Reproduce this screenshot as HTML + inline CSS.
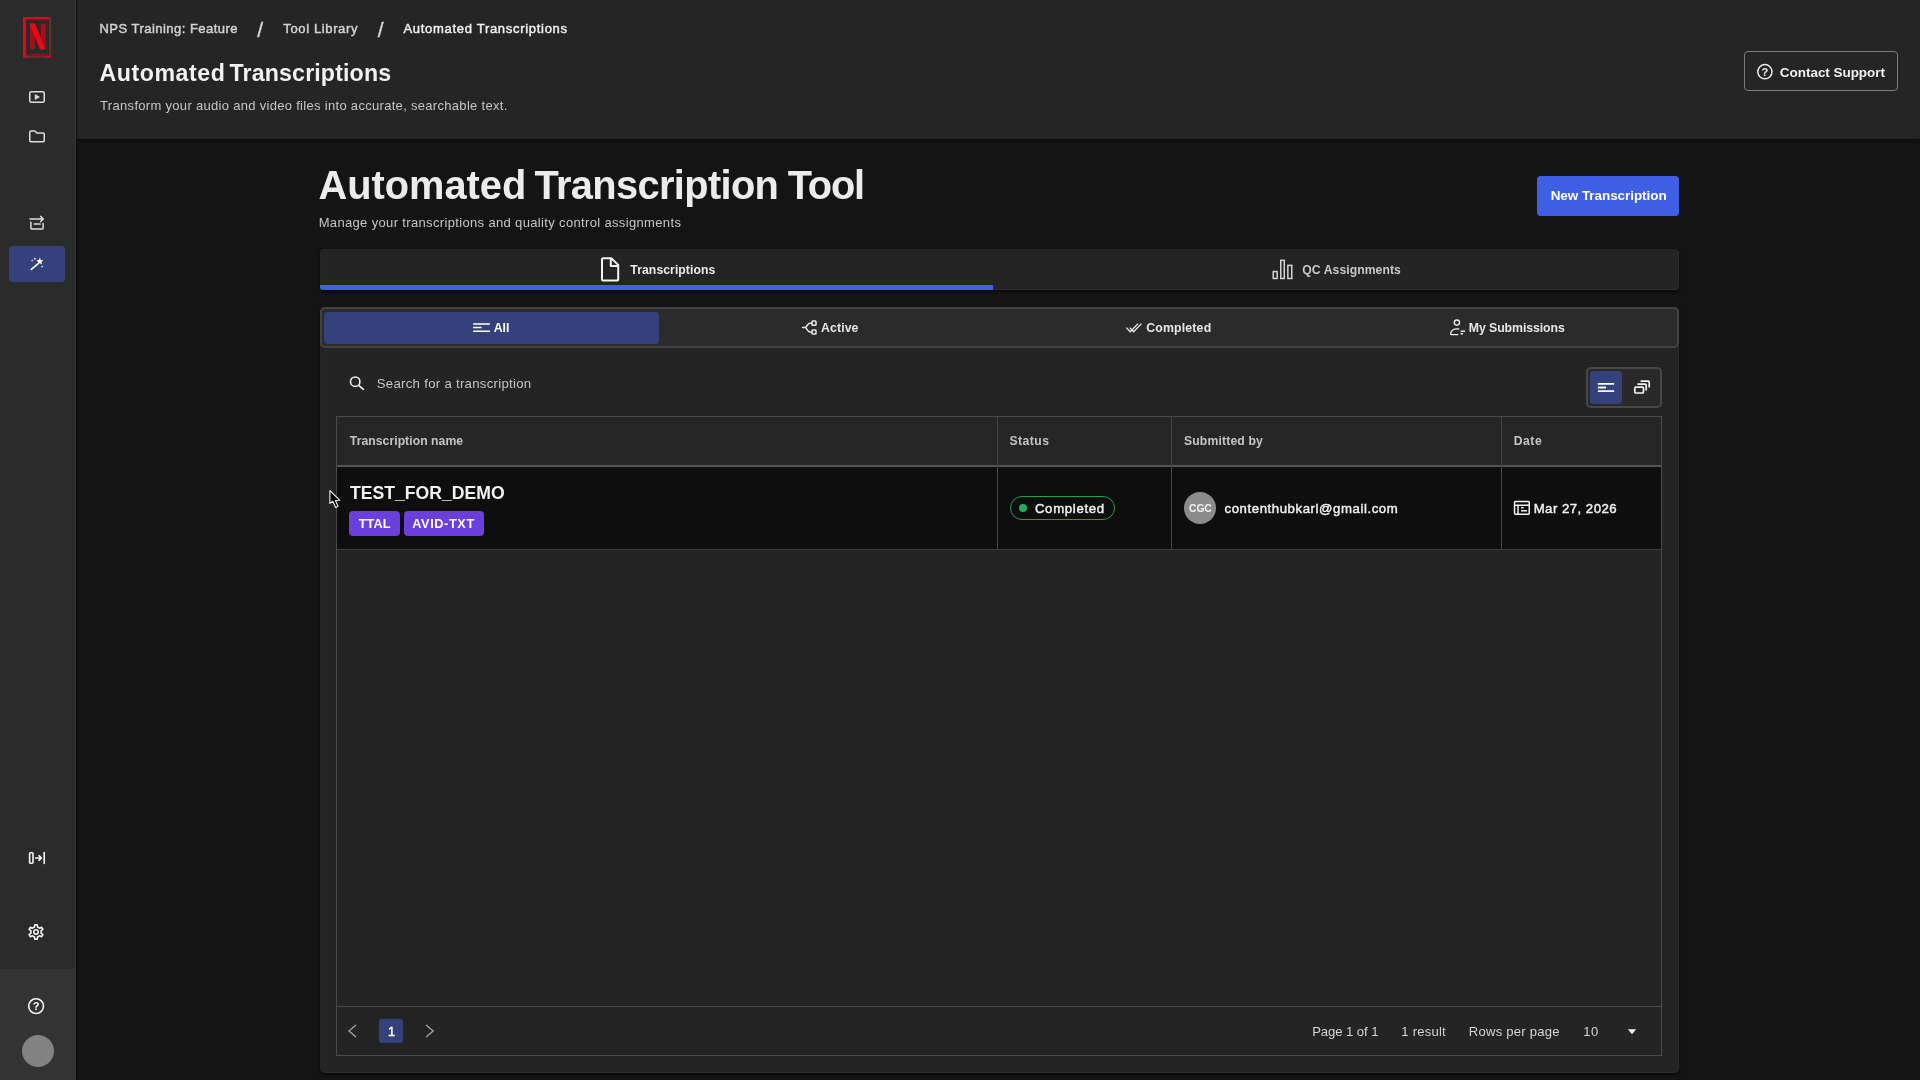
<!DOCTYPE html>
<html lang="en">
<head>
<meta charset="utf-8">
<title>Automated Transcriptions</title>
<style>
*{box-sizing:border-box;margin:0;padding:0}
html,body{width:1920px;height:1080px;overflow:hidden;background:#141414;color:#e8e8e8;
 font-family:"Liberation Sans",sans-serif;font-size:13px}
.abs{position:absolute}
.t{position:absolute;white-space:nowrap;line-height:1}
#bcs1,#bcs2{-webkit-text-stroke:.35px #d8d8d8}
#txtlayer{z-index:7;position:absolute;left:0;top:0;width:1920px;height:1080px;will-change:transform}
svg{display:block;position:absolute;overflow:visible}
.ic{fill:none;stroke:#dedede;stroke-width:1.5;stroke-linecap:round;stroke-linejoin:round}
/* sidebar */
#side{left:0;top:0;width:76px;height:1080px;background:#2b2b2b;border-right:1.4px solid #353535;box-shadow:1px 0 2px rgba(0,0,0,.55);z-index:5}
#sidefoot{left:0;top:969px;width:74.6px;height:111px;background:#333333;z-index:5}
#navact{z-index:5;left:9px;top:246px;width:56px;height:36px;border-radius:4px;background:#34417a}
#avatar{z-index:5;left:22px;top:1035px;width:32px;height:32px;border-radius:50%;background:#828282}
/* header */
#head{left:76px;top:0;width:1844px;height:139px;background:#252525;box-shadow:0 1px 2px rgba(0,0,0,.6)}
#support{left:1743.6px;top:51.2px;width:154.6px;height:40px;border:1.3px solid #7c7c7c;border-radius:4px}
/* main */
#newbtn{left:1537px;top:175.8px;width:142.2px;height:39.8px;border-radius:3.5px;background:#3f5fe4}
#tabs{left:319.5px;top:248.8px;width:1359.7px;height:41.6px;border-radius:4px;background:#242424;border:1px solid #2c2c2c;border-top-color:#262626;border-left-color:#262626;box-shadow:0 2px 3px rgba(0,0,0,.55)}
#tabline{left:319.5px;top:285.1px;width:673.5px;height:4.9px;background:#4060e6;border-radius:0 0 0 3px}
#card{left:319.5px;top:307px;width:1359.7px;height:766px;border-radius:5px;background:#242424;border:1px solid #2c2c2c;border-top-color:#262626;border-left-color:#262626;box-shadow:0 2px 3px rgba(0,0,0,.55)}
#filter{left:319.5px;top:307px;width:1359.5px;height:41.4px;border:2px solid #424242;border-radius:5px;background:#2b2b2b}
#fact{left:324px;top:312px;width:335px;height:31.5px;border-radius:4px;background:#34417a}
#toggle{left:1585.9px;top:367px;width:76px;height:41px;border:2px solid #484848;border-radius:5px;background:#292929}
#togact{left:1589.8px;top:371.3px;width:32.3px;height:32.4px;border-radius:4px;background:#34417a}
/* table */
#table{left:336px;top:415.5px;width:1325.5px;height:640px;border:1px solid #4a4a4a}
#thead{left:337px;top:416.5px;width:1323.5px;height:48.5px;background:#262626}
#theadb{left:337px;top:464.5px;width:1323.5px;height:2.2px;background:#555555}
#row{left:337px;top:466.7px;width:1323.5px;height:82.5px;background:#0e0e0e}
#rowb{left:337px;top:549px;width:1323.5px;height:1px;background:#3c3c3c}
.vd{top:416.5px;width:1px;height:133px;background:#454545}
#footb{left:337px;top:1006px;width:1323.5px;height:1px;background:#4a4a4a}
.badge{top:511.4px;height:24.4px;border-radius:4px;background:#6a3fdc}
#pill{left:1009.8px;top:495.7px;width:105.2px;height:24.4px;border:1.3px solid #259c4e;border-radius:12px}
#dot{left:1018.8px;top:503.8px;width:8.5px;height:8.5px;border-radius:50%;background:#28ab5c}
#uava{left:1183.7px;top:492px;width:32.2px;height:32.2px;border-radius:50%;background:#8b8b8b}
#pgbox{left:379px;top:1018.6px;width:24px;height:24px;border-radius:3px;background:#34417a}
</style>
</head>
<body>
<!-- SIDEBAR -->
<div id="side" class="abs"></div>
<div id="sidefoot" class="abs"></div>
<div id="navact" class="abs"></div>
<div id="avatar" class="abs"></div>
<svg width="76" height="1080" viewBox="0 0 76 1080" style="left:0;top:0;z-index:6">
<!-- logo -->
<rect x="24.1" y="18.1" width="26" height="38.6" fill="#252a2a" stroke="#6e2a2e" stroke-width="2.2"/>
<rect x="26.6" y="20.6" width="21" height="33.6" fill="none" stroke="#4c2325" stroke-width="1"/>
<path d="M24.4,57.6 V17.2" fill="none" stroke="#e30a16" stroke-width="2.8"/><path d="M23,18.1 H50" fill="none" stroke="#e30a16" stroke-width="1.9"/>
<path d="M23,56.6 H28 M46,56.4 H50.8" fill="none" stroke="#d00b16" stroke-width="2"/>
<path d="M31,54.6 H44" fill="none" stroke="#a40e17" stroke-width="1.4"/>
<text x="37.4" y="48.4" text-anchor="middle" font-family="Liberation Sans, sans-serif" font-weight="bold" font-size="33.7" fill="#a50f18" stroke="#a50f18" stroke-width="2.6" transform="translate(37.4 0) scale(0.70 1) translate(-37.4 0)">N</text>
<polygon points="29.3,23.3 34.8,23.3 45.6,49.4 40.1,49.4" fill="#e50a16"/>
<!-- play -->
<rect class="ic" x="29.75" y="91.75" width="14.5" height="10.5" rx="1.6"/>
<path d="M35.1,94.5 L39.5,97 L35.1,99.5Z" fill="#dedede" stroke="#dedede" stroke-width=".6" stroke-linejoin="round"/>
<!-- folder -->
<path class="ic" d="M29.75,132.2 a1.2,1.2 0 0 1 1.2,-1.2 h3.9 l2,2 h6.2 a1.2,1.2 0 0 1 1.2,1.2 v6.3 a1.2,1.2 0 0 1 -1.2,1.2 h-12.1 a1.2,1.2 0 0 1 -1.2,-1.2 z"/>
<!-- batch -->
<path class="ic" d="M30,219 H43.2 M40.6,216.4 L43.3,219 L40.6,221.6"/>
<path class="ic" d="M30.9,222.2 V228 a1.1,1.1 0 0 0 1.1,1.1 H42 a1.1,1.1 0 0 0 1.1,-1.1 V223.4"/>
<path class="ic" style="stroke-width:1.7" d="M34.4,224 H40"/>
<!-- wand -->
<path d="M31.3,269.4 L37.6,264.1" stroke="#ffffff" stroke-width="1.7" stroke-linecap="round" fill="none"/>
<path d="M39.9,257.6 L40.8,260.1 L43.4,260.3 L41.4,262 L42.1,264.6 L39.9,263.2 L37.6,264.5 L38.3,262 L36.4,260.3 L39,260.1Z" fill="#ffffff"/>
<circle cx="32.2" cy="260.5" r=".85" fill="#e6e6ff"/><circle cx="34.8" cy="258.8" r=".95" fill="#e6e6ff"/><circle cx="42.2" cy="266.5" r=".85" fill="#e6e6ff"/>
<!-- collapse -->
<rect class="ic" style="stroke:#f6f6f6;stroke-width:1.6" x="29.6" y="852.8" width="3.4" height="10.4" rx=".9"/>
<path class="ic" style="stroke:#f6f6f6;stroke-width:1.6" d="M35.6,858 H41.2 M39,855.7 L41.4,858 L39,860.3 M44.2,852.6 V863.4"/>
<!-- gear -->
<path class="ic" style="stroke:#f6f6f6;stroke-width:1.55" d="M34.44,927.04 L34.84,924.69 L37.16,924.69 L37.56,927.04 L39.52,928.17 L41.75,927.34 L42.91,929.35 L41.07,930.87 L41.07,933.13 L42.91,934.65 L41.75,936.66 L39.52,935.83 L37.56,936.96 L37.16,939.31 L34.84,939.31 L34.44,936.96 L32.48,935.83 L30.25,936.66 L29.09,934.65 L30.93,933.13 L30.93,930.87 L29.09,929.35 L30.25,927.34 L32.48,928.17Z"/>
<circle class="ic" style="stroke:#f6f6f6;stroke-width:1.5" cx="36" cy="932" r="2.2"/>
<!-- help -->
<circle class="ic" style="stroke:#f4f4f4;stroke-width:1.6" cx="36.1" cy="1006.1" r="7.4"/>
</svg>


<!-- HEADER -->
<div id="head" class="abs"></div>
<div id="support" class="abs"></div>

<!-- MAIN -->
<div id="newbtn" class="abs"></div>
<div id="tabs" class="abs"></div>
<div id="tabline" class="abs"></div>
<div id="card" class="abs"></div>
<div id="filter" class="abs"></div>
<div id="fact" class="abs"></div>
<div id="toggle" class="abs"></div>
<div id="togact" class="abs"></div>

<!-- TABLE -->
<div id="table" class="abs"></div>
<div id="thead" class="abs"></div>
<div id="row" class="abs"></div>
<div id="theadb" class="abs"></div>
<div id="rowb" class="abs"></div>
<div class="abs vd" style="left:997px"></div>
<div class="abs vd" style="left:1171px"></div>
<div class="abs vd" style="left:1501px"></div>
<div id="footb" class="abs"></div>
<div class="abs badge" style="left:349px;width:50.6px"></div>
<div class="abs badge" style="left:403.6px;width:80.2px"></div>
<div id="pill" class="abs"></div>
<div id="dot" class="abs"></div>
<div id="uava" class="abs"></div>
<div id="pgbox" class="abs"></div>

<svg width="1844" height="1080" viewBox="76 0 1844 1080" style="left:76px;top:0">
<g>
<!-- support --><circle cx="1764.9" cy="71.7" r="7.1" fill="none" stroke="#ececec" stroke-width="1.5"/>
<!-- file -->
<path d="M603,258.3 h8.3 l6.9,6.6 v14.6 a1,1 0 0 1 -1,1 h-14.2 a1,1 0 0 1 -1,-1 v-20.2 a1,1 0 0 1 1,-1 z M610.8,258.5 v7.6 h7.2" fill="none" stroke="#f4f4f4" stroke-width="2" stroke-linejoin="round"/>
<!-- bars -->
<g fill="none" stroke="#d2d2d2" stroke-width="1.5">
<rect x="1273.25" y="271.55" width="3.9" height="6.9"/><rect x="1280.75" y="260.35" width="3.5" height="18.1"/><rect x="1287.85" y="265.35" width="3.9" height="13.1"/>
</g>
<!-- all -->
<path d="M473.1,324 H489.9 M473.1,327.5 H481.6 M473.1,331.2 H489.9" stroke="#ffffff" stroke-width="1.6" fill="none"/>
<!-- active -->
<g fill="none" stroke="#ececec" stroke-width="1.5" stroke-linejoin="round" stroke-linecap="round">
<path d="M802.6,327.5 H805.2 M811.2,323.3 H809.8 C807.6,323.3 806.6,327.5 805.2,327.5 C806.6,327.5 807.6,331.9 809.8,331.9 H811.2"/>
<rect x="812" y="321.1" width="4" height="4.2" rx=".8"/><rect x="812" y="329.9" width="4" height="4.2" rx=".8"/>
</g>
<!-- double check -->
<path d="M1126.3,327.6 L1130.2,331.7 L1138.1,323.6 M1129.6,327.6 L1133.6,331.7 L1141.5,323.6" fill="none" stroke="#ececec" stroke-width="1.3"/>
<!-- person -->
<g fill="none" stroke="#ececec" stroke-width="1.4" stroke-linecap="round">
<circle cx="1456.9" cy="322.6" r="2.6"/>
<path d="M1458.6,329 C1453.5,328.2 1450.9,331 1450.6,333.6 Q1450.5,334.6 1451.6,334.6 H1457.8"/>
<path d="M1460.6,331.3 H1465 M1460.6,333.8 H1463" stroke-width="1.6" stroke-linecap="butt"/>
</g>
<!-- search -->
<circle cx="355.2" cy="381.7" r="4.7" fill="none" stroke="#f0f0f0" stroke-width="1.6"/>
<path d="M358.7,385.3 L363.4,389.3" stroke="#f0f0f0" stroke-width="1.7" stroke-linecap="round"/>
<!-- toggle lines -->
<path d="M1597.9,383.8 H1614.2 M1597.9,387.5 H1606.1 M1597.9,391.1 H1614.2" stroke="#ffffff" stroke-width="1.8" fill="none"/>
<!-- stack -->
<g fill="none" stroke="#f2f2f2" stroke-width="1.7" stroke-linejoin="round">
<rect x="1634.8" y="387.2" width="8.7" height="5.8" rx="1"/>
<path d="M1637.4,384.2 H1645.2 a1,1 0 0 1 1,1 V390.6"/>
<path d="M1640.6,381.1 H1648.2 a1,1 0 0 1 1,1 V387.5"/>
</g>
<!-- date icon -->
<g fill="none" stroke="#f0f0f0" stroke-width="1.5">
<rect x="1514.55" y="501.55" width="14.7" height="12.6" rx=".8"/>
<path d="M1514.6,505.3 H1529.2 M1518,505.3 V514"/>
<path d="M1521,507.8 H1523.6 M1521,510.7 H1527" stroke-width="1.5"/>
</g>
<!-- chevrons -->
<path d="M356,1025 L348.9,1030.9 L356,1037.1" fill="none" stroke="#a4a4a4" stroke-width="1.3"/>
<path d="M426.1,1025 L433.2,1030.9 L426.1,1037.1" fill="none" stroke="#a4a4a4" stroke-width="1.3"/>
<!-- caret -->
<path d="M1627.8,1029.2 H1636.2 L1632,1034.2Z" fill="#f0f0f0"/>
<!-- cursor -->
<path d="M329.9,490.6 V503.4 L332.8,501.3 L335.6,507.5 L338,506.2 L335.4,500.5 L339.6,500.2Z" fill="#000000" stroke="#f2f2f2" stroke-width="1.1" stroke-linejoin="round"/>
</g>
</svg>


<div id="txtlayer">
<span class="t" id="bc1" style="left:99.53px;top:21.80px;font-size:13px;font-weight:normal;color:#d2d2d2;-webkit-text-stroke:.45px #d2d2d2;letter-spacing:0.471px">NPS Training: Feature</span>
<span class="t" id="bcs1" style="left:257.28px;top:19.42px;font-size:21px;font-weight:normal;color:#d8d8d8">/</span>
<span class="t" id="bc2" style="left:283.36px;top:21.80px;font-size:13px;font-weight:normal;color:#d2d2d2;-webkit-text-stroke:.45px #d2d2d2;letter-spacing:0.621px">Tool Library</span>
<span class="t" id="bcs2" style="left:377.78px;top:19.42px;font-size:21px;font-weight:normal;color:#d8d8d8">/</span>
<span class="t" id="bc3" style="left:403.48px;top:21.80px;font-size:13px;font-weight:normal;color:#f0f0f0;-webkit-text-stroke:.45px #f0f0f0;letter-spacing:0.701px">Automated Transcriptions</span>
<span class="t" id="h1" style="left:99.51px;top:61.66px;font-size:23.2px;font-weight:bold;color:#f2f2f2;letter-spacing:0.538px">Automated</span>
<span class="t" id="h1b" style="left:229.62px;top:61.66px;font-size:23.2px;font-weight:bold;color:#f2f2f2;letter-spacing:0.130px">Transcriptions</span>
<span class="t" id="hsub" style="left:100.12px;top:99.00px;font-size:13px;font-weight:normal;color:#c6c6c6;letter-spacing:0.304px">Transform your audio and video files into accurate, searchable text.</span>
<span class="t" id="supportt" style="left:1779.86px;top:65.77px;font-size:13.5px;font-weight:bold;color:#f0f0f0;letter-spacing:-0.044px">Contact Support</span>
<span class="t" id="title" style="left:318.50px;top:165.71px;font-size:39.8px;font-weight:bold;color:#ececec;letter-spacing:-0.013px">Automated</span>
<span class="t" id="title2" style="left:534.56px;top:165.71px;font-size:39.8px;font-weight:bold;color:#ececec;letter-spacing:-0.646px">Transcription</span>
<span class="t" id="title3" style="left:787.70px;top:165.71px;font-size:39.8px;font-weight:bold;color:#ececec;letter-spacing:-1.180px">Tool</span>
<span class="t" id="tsub" style="left:318.65px;top:216.00px;font-size:13px;font-weight:normal;color:#c6c6c6;letter-spacing:0.346px">Manage your transcriptions and quality control assignments</span>
<span class="t" id="newt" style="left:1550.63px;top:189.07px;font-size:13.5px;font-weight:bold;color:#ffffff;letter-spacing:-0.064px">New Transcription</span>
<span class="t" id="tab1" style="left:630.36px;top:263.57px;font-size:12.2px;font-weight:bold;color:#ececec;letter-spacing:0.071px">Transcriptions</span>
<span class="t" id="tab2" style="left:1302.34px;top:263.77px;font-size:12.2px;font-weight:bold;color:#c8c8c8;letter-spacing:0.059px">QC Assignments</span>
<span class="t" id="f1" style="left:493.69px;top:321.59px;font-size:12.3px;font-weight:bold;color:#ffffff;letter-spacing:-0.042px">All</span>
<span class="t" id="f2" style="left:821.06px;top:321.59px;font-size:12.3px;font-weight:bold;color:#e6e6e6;letter-spacing:0.099px">Active</span>
<span class="t" id="f3" style="left:1146.14px;top:321.59px;font-size:12.3px;font-weight:bold;color:#e6e6e6;letter-spacing:0.187px">Completed</span>
<span class="t" id="f4" style="left:1468.78px;top:321.59px;font-size:12.3px;font-weight:bold;color:#e6e6e6;letter-spacing:-0.076px">My Submissions</span>
<span class="t" id="search" style="left:376.75px;top:377.33px;font-size:13.2px;font-weight:normal;color:#c4c4c4;letter-spacing:0.284px">Search for a transcription</span>
<span class="t" id="th1" style="left:349.85px;top:434.67px;font-size:12.2px;font-weight:bold;color:#c4c4c4;letter-spacing:0.046px">Transcription name</span>
<span class="t" id="th2" style="left:1009.50px;top:434.67px;font-size:12.2px;font-weight:bold;color:#c4c4c4;letter-spacing:0.456px">Status</span>
<span class="t" id="th3" style="left:1183.93px;top:434.67px;font-size:12.2px;font-weight:bold;color:#c4c4c4;letter-spacing:0.160px">Submitted by</span>
<span class="t" id="th4" style="left:1513.66px;top:434.67px;font-size:12.2px;font-weight:bold;color:#c4c4c4;letter-spacing:0.562px">Date</span>
<span class="t" id="name" style="left:349.98px;top:484.50px;font-size:17.6px;font-weight:bold;color:#f2f2f2;letter-spacing:0.024px">TEST_FOR_DEMO</span>
<span class="t" id="b1" style="left:358.68px;top:517.55px;font-size:12.7px;font-weight:bold;color:#ffffff;letter-spacing:0.113px">TTAL</span>
<span class="t" id="b2" style="left:412.20px;top:517.55px;font-size:12.7px;font-weight:bold;color:#ffffff;letter-spacing:0.632px">AVID-TXT</span>
<span class="t" id="stat" style="left:1034.90px;top:501.93px;font-size:13.2px;font-weight:normal;color:#f0f0f0;-webkit-text-stroke:.45px #f0f0f0;letter-spacing:0.692px">Completed</span>
<span class="t" id="cgc" style="left:1189.00px;top:503.98px;font-size:10.3px;font-weight:bold;color:#f4f4f4;letter-spacing:-0.050px">CGC</span>
<span class="t" id="email" style="left:1224.51px;top:501.73px;font-size:13.2px;font-weight:normal;color:#f0f0f0;-webkit-text-stroke:.45px #f0f0f0;letter-spacing:0.574px">contenthubkarl@gmail.com</span>
<span class="t" id="date" style="left:1533.65px;top:501.73px;font-size:13.2px;font-weight:normal;color:#f0f0f0;-webkit-text-stroke:.45px #f0f0f0;letter-spacing:0.480px">Mar 27, 2026</span>
<span class="t" id="pg1" style="left:388.00px;top:1025.73px;font-size:12.6px;font-weight:normal;color:#ffffff;-webkit-text-stroke:.45px #ffffff">1</span>
<span class="t" id="pinfo" style="left:1312.13px;top:1024.81px;font-size:13.1px;font-weight:normal;color:#d4d4d4;letter-spacing:-0.061px">Page 1 of 1</span>
<span class="t" id="pres" style="left:1401.35px;top:1024.81px;font-size:13.1px;font-weight:normal;color:#d4d4d4;letter-spacing:0.211px">1 result</span>
<span class="t" id="prows" style="left:1468.79px;top:1024.81px;font-size:13.1px;font-weight:normal;color:#d4d4d4;letter-spacing:0.219px">Rows per page</span>
<span class="t" id="pten" style="left:1583.35px;top:1024.81px;font-size:13.1px;font-weight:normal;color:#d4d4d4;letter-spacing:0.301px">10</span>
<span class="t" id="helpq" style="left:32.75px;top:1000.89px;font-size:11px;font-weight:bold;color:#ffffff">?</span>
<span class="t" id="supq" style="left:1761.55px;top:66.59px;font-size:11px;font-weight:bold;color:#f0f0f0">?</span>
</div>
</body>
</html>
